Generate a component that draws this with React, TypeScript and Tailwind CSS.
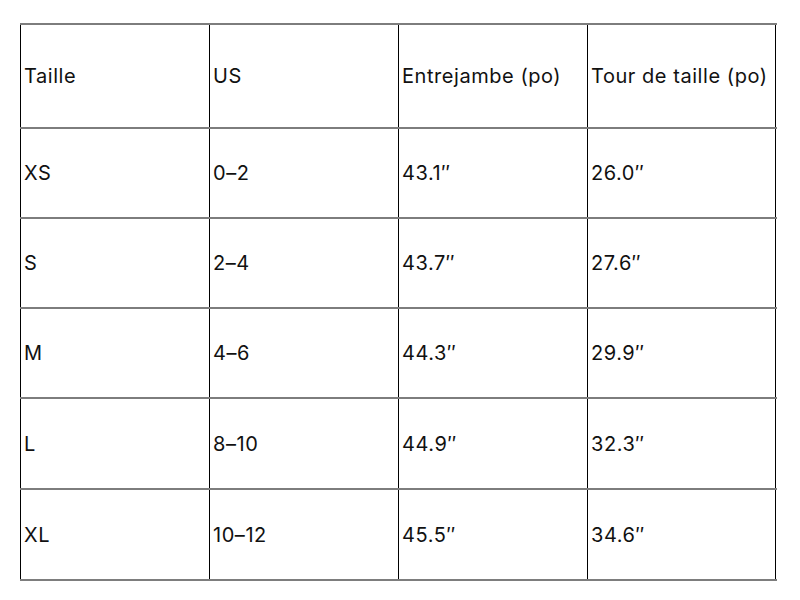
const HEADERS = ['Taille', 'US', 'Entrejambe (po)', 'Tour de taille (po)'];

const ROWS: { cells: string[]; h: string }[] = [
  { cells: ['XS', '0–2', '43.1″', '26.0″'], h: 'h-[90px]' },
  { cells: ['S', '2–4', '43.7″', '27.6″'], h: 'h-[90px]' },
  { cells: ['M', '4–6', '44.3″', '29.9″'], h: 'h-[90px]' },
  { cells: ['L', '8–10', '44.9″', '32.3″'], h: 'h-[91px]' },
  { cells: ['XL', '10–12', '45.5″', '34.6″'], h: 'h-[91px]' },
];

function Row({ cells, h }: { cells: string[]; h: string }) {
  return (
    <div className={`flex ${h} border-b-2 border-[#7d7d7d]`}>
      {cells.map((c, i) => (
        <div
          key={i}
          className={`flex w-[189px] items-center whitespace-nowrap border-l border-black pl-[3px] ${i === 3 ? 'border-r' : ''}`}
        >
          {c}
        </div>
      ))}
    </div>
  );
}

export default function App() {
  return (
    <div className="min-h-screen w-[800px] bg-white pl-[20px] pt-[23px] text-[20px] tracking-[0.55px] text-[#111] [font-family:Inter,'Liberation_Sans',sans-serif]">
      <div className="w-[757px] border-t-2 border-[#7d7d7d]">
        <Row cells={HEADERS} h="h-[104px]" />
        {ROWS.map((r, i) => (
          <Row key={i} cells={r.cells} h={r.h} />
        ))}
      </div>
    </div>
  );
}
